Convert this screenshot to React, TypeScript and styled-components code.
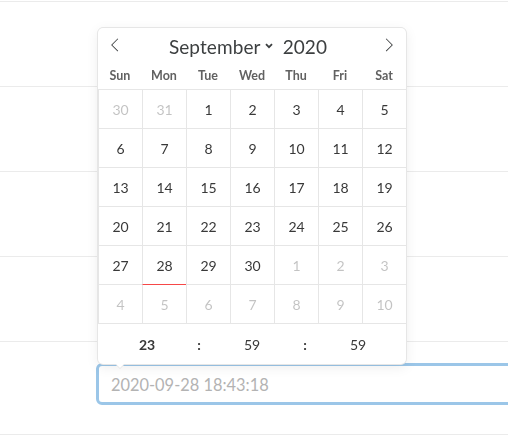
import React from 'react';
import styled, { createGlobalStyle } from 'styled-components';

const GlobalStyle = createGlobalStyle`
  html, body {
    margin: 0;
    padding: 0;
    background: #fff;
    overflow: hidden;
  }
  body {
    font-family: Lato, "Open Sans", sans-serif;
  }
`;

const Page = styled.div`
  position: relative;
  width: 508px;
  height: 438px;
  overflow: clip;
  padding-top: 1px;
  box-sizing: border-box;
`;

const Row = styled.div<{ $last?: boolean }>`
  height: ${({ $last }) => ($last ? 94 : 85)}px;
  box-sizing: border-box;
  border-top: 1px solid #ebebeb;
  border-bottom: ${({ $last }) => ($last ? '1px solid #ebebeb' : 'none')};
  padding: 21px 0 0 96px;
  overflow: clip;
`;

const DateInput = styled.input`
  display: block;
  width: 440px;
  height: 42px;
  box-sizing: border-box;
  border: 3px solid #9bc6e8;
  border-radius: 6px;
  padding: 0 12px;
  font-family: Lato, "Open Sans", sans-serif;
  font-size: 16.4px;
  color: #333;
  caret-color: #444;
  outline: none;
  background: #fff;

  &::placeholder {
    color: #b3b3b3;
  }
`;

const Popup = styled.div`
  position: absolute;
  left: 98px;
  top: 28px;
  width: 308px;
  background: #fff;
  border-radius: 5px;
  box-shadow: 1px 0 0 #e6e6e6, -1px 0 0 #e6e6e6, 0 1px 0 #e6e6e6, 0 -1px 0 #e6e6e6,
    0 3px 13px rgba(0, 0, 0, 0.08);

  &::before,
  &::after {
    content: '';
    position: absolute;
    top: 100%;
    border: solid transparent;
    height: 0;
    width: 0;
  }
  &::before {
    left: 17px;
    border-width: 5px;
    border-top-color: #e6e6e6;
  }
  &::after {
    left: 18px;
    border-width: 4px;
    border-top-color: #fff;
  }
`;

const MonthBar = styled.div`
  height: 34px;
  display: flex;
  align-items: center;
  justify-content: space-between;
  color: #3c3f40;
`;

const NavButton = styled.span`
  width: 34px;
  height: 34px;
  display: flex;
  align-items: center;
  justify-content: center;

  svg {
    width: 14px;
    height: 14px;
    fill: #3c3f40;
  }
`;

const MonthTitle = styled.div`
  display: flex;
  align-items: center;
  padding: 2px 8px 0 0;
  font-size: 19px;
  font-weight: 400;
  letter-spacing: 0.1px;
`;

const MonthSelect = styled.span`
  display: flex;
  align-items: center;
  gap: 4px;
  margin-right: 10px;

  svg {
    width: 8px;
    height: 6px;
  }
`;

const Weekdays = styled.div`
  height: 27px;
  display: grid;
  grid-template-columns: repeat(7, 1fr);
  align-items: center;
`;

const Weekday = styled.span`
  text-align: center;
  font-size: 12.5px;
  font-weight: 700;
  color: #616161;
`;

const DayGrid = styled.div`
  display: grid;
  grid-template-columns: repeat(7, 1fr);
  border-top: 1px solid #e6e6e6;
`;

const Day = styled.span<{ $muted?: boolean; $today?: boolean }>`
  height: 39px;
  box-sizing: border-box;
  display: flex;
  align-items: center;
  justify-content: center;
  border-left: 1px solid #e6e6e6;
  border-bottom: 1px solid ${({ $today }) => ($today ? '#f64747' : '#e6e6e6')};
  font-size: 14px;
  color: ${({ $muted }) => ($muted ? 'rgba(57, 57, 57, 0.3)' : '#393939')};
`;

const TimeBar = styled.div`
  height: 40px;
  display: grid;
  grid-template-columns: 98px 6px 100px 6px 100px 1fr;
  align-items: center;
  font-size: 14px;
  color: #393939;
`;

const TimeValue = styled.span<{ $bold?: boolean }>`
  text-align: center;
  font-weight: ${({ $bold }) => ($bold ? 700 : 400)};
`;

const TimeSep = styled.span`
  text-align: center;
  font-weight: 700;
`;

const weekdays = ['Sun', 'Mon', 'Tue', 'Wed', 'Thu', 'Fri', 'Sat'];

type DayCell = { n: number; muted?: boolean; today?: boolean };

const buildDays = (): DayCell[] => {
  const days: DayCell[] = [{ n: 30, muted: true }, { n: 31, muted: true }];
  for (let i = 1; i <= 30; i++) days.push({ n: i, today: i === 28 });
  for (let i = 1; i <= 10; i++) days.push({ n: i, muted: true });
  return days;
};

export default function App() {
  const days = buildDays();

  return (
    <Page>
      <GlobalStyle />
      <Row />
      <Row />
      <Row />
      <Row />
      <Row $last>
        <DateInput autoFocus placeholder="2020-09-28 18:43:18" />
      </Row>

      <Popup>
        <MonthBar>
          <NavButton>
            <svg viewBox="0 0 17 17">
              <path d="M5.207 8.471l7.146 7.147-0.707 0.707-7.853-7.854 7.854-7.853 0.707 0.707-7.147 7.146z" />
            </svg>
          </NavButton>
          <MonthTitle>
            <MonthSelect>
              September
              <svg viewBox="0 0 8 6">
                <polyline points="1,1.2 4,4.2 7,1.2" fill="none" stroke="#3c3f40" strokeWidth="1.8" />
              </svg>
            </MonthSelect>
            2020
          </MonthTitle>
          <NavButton>
            <svg viewBox="0 0 17 17">
              <path d="M13.207 8.472l-7.854 7.854-0.707-0.707 7.146-7.146-7.146-7.148 0.707-0.707 7.854 7.854z" />
            </svg>
          </NavButton>
        </MonthBar>

        <Weekdays>
          {weekdays.map(w => (
            <Weekday key={w}>{w}</Weekday>
          ))}
        </Weekdays>

        <DayGrid>
          {days.map((d, i) => (
            <Day key={i} $muted={d.muted} $today={d.today}>
              {d.n}
            </Day>
          ))}
        </DayGrid>

        <TimeBar>
          <TimeValue $bold>23</TimeValue>
          <TimeSep>:</TimeSep>
          <TimeValue>59</TimeValue>
          <TimeSep>:</TimeSep>
          <TimeValue>59</TimeValue>
        </TimeBar>
      </Popup>
    </Page>
  );
}
